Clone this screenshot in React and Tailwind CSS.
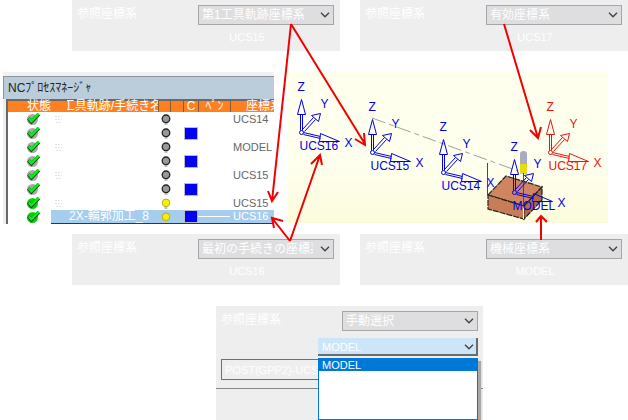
import React from "react";

const FONT = "font-['Liberation_Sans','Noto_Sans_CJK_JP',sans-serif]";

function Chevron() {
  return (
    <svg
      className="pointer-events-none absolute inset-y-0 right-1 my-auto"
      width="10"
      height="6"
      viewBox="0 0 10 6"
      fill="none"
      stroke="#444"
      strokeWidth="1.4"
      aria-hidden="true"
    >
      <path d="M1 0.8 L5 4.8 L9 0.8" />
    </svg>
  );
}

function SystemSelect({ id, value }) {
  return (
    <div className="flex items-start justify-between pr-[6px] pl-[5px]">
      <label htmlFor={id} className="pt-px text-xs leading-4 text-white">
        参照座標系
      </label>
      <div className="relative w-[136px]">
        <select
          id={id}
          defaultValue={value}
          className="block h-5 w-full appearance-none border border-[#a6a6a6] bg-[#dedee0] pr-5 pl-[3px] text-xs leading-4 text-white"
        >
          <option>{value}</option>
        </select>
        <Chevron />
      </div>
    </div>
  );
}

function SystemPanel({ id, value, name }) {
  return (
    <section className="h-[51px] bg-[#eeeeee] pt-[5px]">
      <SystemSelect id={id} value={value} />
      <p className="mt-1 pl-[82px] text-center text-[11px] leading-4 text-white">{name}</p>
    </section>
  );
}

function StatusCheck({ done }) {
  return (
    <svg width="14" height="14" viewBox="0 0 14 14" role="img" aria-label={done ? "完了" : "計算済"}>
      <circle cx="6.5" cy="7.5" r="5.5" fill={done ? "#0ccf12" : "#a9a9a9"} />
      <path d="M2.4 6.4 L5.4 9.8 L12.8 2.2" fill="none" stroke="#0b4a12" strokeWidth="3.6" />
      <path d="M2.8 6.4 L5.4 9.2 L12.8 1.6" fill="none" stroke="#08f216" strokeWidth="2.4" />
    </svg>
  );
}

function Bulb({ lit }) {
  return (
    <svg width="12" height="14" viewBox="0 0 12 14" aria-hidden="true">
      <rect x="4.5" y="10" width="3" height="3" fill="#c4c4c4" />
      <circle
        cx="6"
        cy="6.8"
        r="3.8"
        fill={lit ? "#f8f000" : "#999"}
        stroke={lit ? "#b5ad20" : "#222"}
        strokeWidth={lit ? "1" : "1.3"}
      />
    </svg>
  );
}

function GhostIcon() {
  return (
    <svg width="9" height="10" viewBox="0 0 9 10" fill="none" stroke="#e2e2e2" aria-hidden="true">
      <path d="M1 2.5 H8 M1 5.5 H8 M2 8.5 H7" strokeDasharray="2 1" />
    </svg>
  );
}

const ROWS = [
  { ghost: true, system: "UCS14" },
  { color: true },
  { ghost: true, system: "MODEL" },
  { color: true },
  { ghost: true, system: "UCS15" },
  { color: true },
  { ghost: true, done: true, lit: true, system: "UCS15" },
  { done: true, lit: true, color: true, selected: true, name: "2X-輪郭加工_8", system: "UCS16" },
];

function ProcessManager() {
  const head = "h-[11px] p-0 font-normal";
  const line = "border-l border-[#8f5a2c]";
  return (
    <section className="w-[271px] shrink-0 border-t-4 border-[#f1f1f1]">
      <h1 className="h-[23px] border-t border-l border-[#8d9499] bg-[#bbccda] pt-[3px] pl-1 text-xs leading-4 font-normal text-[#222]">
        NCﾌﾟﾛｾｽﾏﾈｰｼﾞｬ
      </h1>
      <div className="border-l-[3px] border-[#eeeeee]">
        <table className="w-full table-fixed border-separate border-spacing-0 border-t-2 border-l-2 border-[#696969] bg-white text-[11px]">
          <colgroup>
            <col className="w-[43px]" />
            <col className="w-[107px]" />
            <col className="w-3" />
            <col className="w-[13px]" />
            <col className="w-[15px]" />
            <col className="w-8" />
            <col />
          </colgroup>
          <thead>
            <tr className="bg-[#ff8020] text-xs leading-[11px] whitespace-nowrap text-white">
              <th className={`${head} text-right`}>状態</th>
              <th className={`${head} pl-4`}>
                <div className="flex justify-center overflow-x-clip">
                  <span className="shrink-0">工具軌跡/手続き名</span>
                </div>
              </th>
              <th className={`${head} ${line}`} aria-label="表示" />
              <th className={`${head} ${line}`} aria-label="固定" />
              <th className={`${head} ${line}`}>C</th>
              <th className={`${head} ${line}`}>ﾍﾟﾝ</th>
              <th className={`${head} ${line} overflow-x-clip pl-[15px] text-left`}>座標系</th>
            </tr>
          </thead>
          <tbody>
            {ROWS.map((row, i) => {
              const cell = row.selected
                ? "h-[14px] p-0 border-b border-[#0a3c8c] bg-[#a5cdee] text-white"
                : "h-[14px] p-0 text-[#666]";
              return (
                <tr key={i} className="leading-[13px] whitespace-nowrap">
                  <td className="h-[14px] p-0">
                    <div className="flex h-[13px] items-center pl-[18px]">
                      <StatusCheck done={row.done} />
                    </div>
                  </td>
                  <td className={`${cell} text-xs leading-[13px]`}>
                    <div className="flex h-[13px] items-center">
                      {row.ghost && (
                        <span className="pl-[3px]">
                          <GhostIcon />
                        </span>
                      )}
                      {row.name && <span className="pl-[18px]">{row.name}</span>}
                    </div>
                  </td>
                  <td className={cell} colSpan={2}>
                    <div className="flex h-[13px] items-center pl-[2px]">
                      <Bulb lit={row.lit} />
                    </div>
                  </td>
                  <td className={cell}>
                    {row.color && (
                      <div className="mx-auto h-[13px] w-[14px] border border-[#b8bcc4] bg-[#0000ff]" />
                    )}
                  </td>
                  <td className={cell}>{row.selected && <div className="h-px bg-white" />}</td>
                  <td className={cell}>
                    <div className="pl-[3px] leading-[13px]">{row.system}</div>
                  </td>
                </tr>
              );
            })}
          </tbody>
        </table>
      </div>
    </section>
  );
}

function Triad({ x, y, name, color }) {
  return (
    <g transform={`translate(${x} ${y})`} stroke={color} fill="none" strokeWidth="1">
      <circle r="2" />
      <path d="M-1 -2 V-18 M1 -2 V-18 M-4 -18 H4 L0 -33 Z" />
      <path d="M1 -3 L12 -15 M3 -1 L14 -13 M10 -17 L17 -11 L19 -19 Z" />
      <path d="M2 0 L19 4 M2 2 L19 6 M19 1 L18 9 L38 9 Z" />
      <g fill={color} stroke="none" fontSize="12">
        <text x="-4" y="-42">Z</text>
        <text x="19" y="-25">Y</text>
        <text x="43" y="14">X</text>
        <text x="-2" y="17">{name}</text>
      </g>
    </g>
  );
}

function ModelView() {
  return (
    <svg
      className="h-[151px] w-80 shrink-0 bg-linear-to-b from-[#ffffee] from-60% to-[#fcfcdc]"
      viewBox="288 72 320 151"
      role="img"
      aria-label="座標系"
    >
      <path
        d="M372 118 L518 171"
        fill="none"
        stroke="#a0a0a0"
        strokeDasharray="14 4 5 4"
      />
      <g stroke="#222" strokeWidth="1.2" strokeDasharray="6 1">
        <path d="M488 195 L506 176 L542 187 L524 206 Z" fill="#cf8560" />
        <path d="M488 195 L524 206 V219 L488 209 Z" fill="#c87d58" />
        <path d="M524 206 L542 187 V200 L524 219 Z" fill="#b06848" />
      </g>
      <path d="M487.5 163 V195" stroke="#c01818" />
      <path d="M520 165 V154 Q520 151 523.5 151 Q527 151 527 154 V165 Z" fill="#a9abc0" />
      <path d="M520 164 H527 V174 H520 Z" fill="#e6dc10" />
      <path d="M523.5 173 V206" stroke="#d01818" />
      <path d="M523.5 206 V219" stroke="#fff" />
      <Triad x={301.5} y={132.5} name="UCS16" color="#0000e6" />
      <Triad x={372.5} y={152.5} name="UCS15" color="#0000e6" />
      <Triad x={443.5} y={172.5} name="UCS14" color="#0000e6" />
      <Triad x={514.5} y={192.5} name="MODEL" color="#0000e6" />
      <Triad x={550.5} y={152.5} name="UCS17" color="#f01010" />
    </svg>
  );
}

function Callouts() {
  return (
    <svg
      className="pointer-events-none absolute top-0 left-0"
      width="628"
      height="420"
      viewBox="0 0 628 420"
      fill="none"
      stroke="#f00000"
      strokeWidth="2"
      aria-hidden="true"
    >
      <path d="M291 24 L272 201 M268 191 L272 201 L278 192" />
      <path d="M291 24 L365 144 M355 139 L365 145 L364 133" />
      <path d="M504 24 L538 138 M530 130 L538 138 L541 127" />
      <path d="M290 241 L272 218 M274 228 L272 218 L283 221" />
      <path d="M290 241 L320 155 M311 164 L320 155 L322 165" />
      <path d="M541 240 V216 M536 222 L541 216 L547 222" />
    </svg>
  );
}

function ManualPanel() {
  return (
    <section className="relative h-[114px] w-[267px] bg-[#eeeeee] pt-[5px]">
      <div className="w-[268px]">
        <SystemSelect id="manual" value="手動選択" />
      </div>
      <div className="relative mt-[7px] ml-[102px] w-40">
        <button
          type="button"
          aria-haspopup="listbox"
          aria-expanded="true"
          className="block h-[18px] w-full border-r-2 border-b-2 border-[#6b6b6b] bg-[#cce5f8] pt-px pl-1 text-left text-[11px] leading-4 text-white"
        >
          MODEL
        </button>
        <Chevron />
        <ul
          role="listbox"
          aria-label="座標系"
          className="absolute top-5 left-0 z-10 h-[62px] w-full border border-[#0078d7] bg-white shadow-[3px_3px_1px_#a8a8a8]"
        >
          <li
            role="option"
            aria-selected="true"
            className="h-3 bg-[#0078d7] pl-[3px] text-[11px] leading-3 text-white"
          >
            MODEL
          </li>
        </ul>
      </div>
      <input
        type="text"
        readOnly
        aria-label="ポスト"
        defaultValue="POST(GPP2)-UCS"
        className="mt-[3px] ml-[5px] block h-[21px] w-[120px] border border-[#6f6f78] bg-transparent px-[3px] text-[11px] text-white"
      />
      <hr className="mt-2 border-t border-[#888]" />
    </section>
  );
}

export default function App() {
  return (
    <main className={`relative h-[420px] overflow-hidden bg-white ${FONT}`}>
      <div className="grid grid-cols-2 gap-5 pl-[72px]">
        <SystemPanel id="first-path" value="第1工具軌跡座標系" name="UCS15" />
        <SystemPanel id="active" value="有効座標系" name="UCS17" />
      </div>
      <div className="mt-[21px] flex h-[153px] items-start gap-[14px] pl-[3px]">
        <ProcessManager />
        <ModelView />
      </div>
      <div className="mt-[9px] grid grid-cols-2 gap-5 pl-[72px]">
        <SystemPanel id="first-procedure" value="最初の手続きの座標系" name="UCS16" />
        <SystemPanel id="machine" value="機械座標系" name="MODEL" />
      </div>
      <div className="mt-[21px] pl-[216px]">
        <ManualPanel />
      </div>
      <Callouts />
    </main>
  );
}
